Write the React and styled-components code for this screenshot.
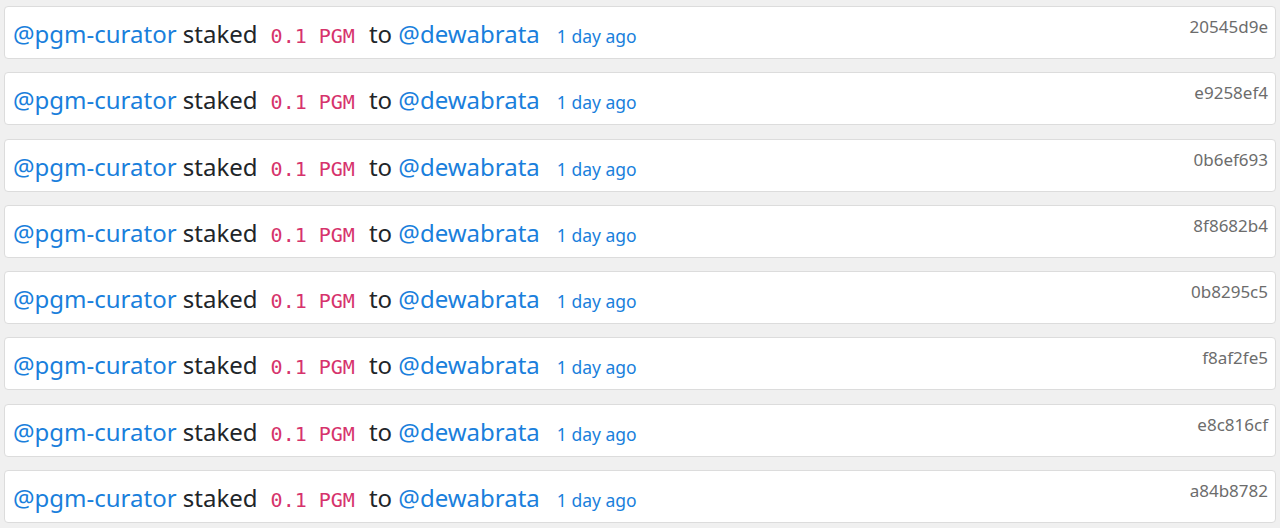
import styled, { createGlobalStyle } from "styled-components";

const Global = createGlobalStyle`
  body {
    margin: 0;
    background: #f0f0f0;
    font-family: "Noto Sans", "Open Sans", sans-serif;
  }
`;

const rows = [
  "20545d9e",
  "e9258ef4",
  "0b6ef693",
  "8f8682b4",
  "0b8295c5",
  "f8af2fe5",
  "e8c816cf",
  "a84b8782",
];

const List = styled.div`
  display: flex;
  flex-direction: column;
  gap: 13.3px;
  padding: 6px 4px 0 4px;
`;

const Card = styled.div`
  display: flex;
  justify-content: space-between;
  align-items: flex-start;
  background: #fff;
  border: 1px solid #dcdcdc;
  border-radius: 4px;
  height: 53px;
  box-sizing: border-box;
  padding: 0 7px 0 8px;
`;

const Line = styled.div`
  font-size: 24px;
  line-height: 54px;
  color: #212529;
  white-space: nowrap;
`;

const User = styled.a`
  color: #1a7fdc;
  text-decoration: none;
`;

const Amount = styled.code`
  font-family: "DejaVu Sans Mono", "Liberation Mono", monospace;
  font-size: 20px;
  color: #d6336c;
  margin: 0 14px 0 13px;
`;

const Ago = styled.span`
  font-size: 17.5px;
  color: #1a7fdc;
  margin-left: 17px;
`;

const Hash = styled.span`
  font-size: 17px;
  line-height: 24px;
  color: #6c6c6c;
  padding-top: 8px;
`;

export default function App() {
  return (
    <>
      <Global />
      <List>
        {rows.map((h) => (
          <Card key={h}>
            <Line>
              <User href="#">@pgm-curator</User> staked
              <Amount>0.1 PGM</Amount>to <User href="#">@dewabrata</User>
              <Ago>1 day ago</Ago>
            </Line>
            <Hash>{h}</Hash>
          </Card>
        ))}
      </List>
    </>
  );
}
